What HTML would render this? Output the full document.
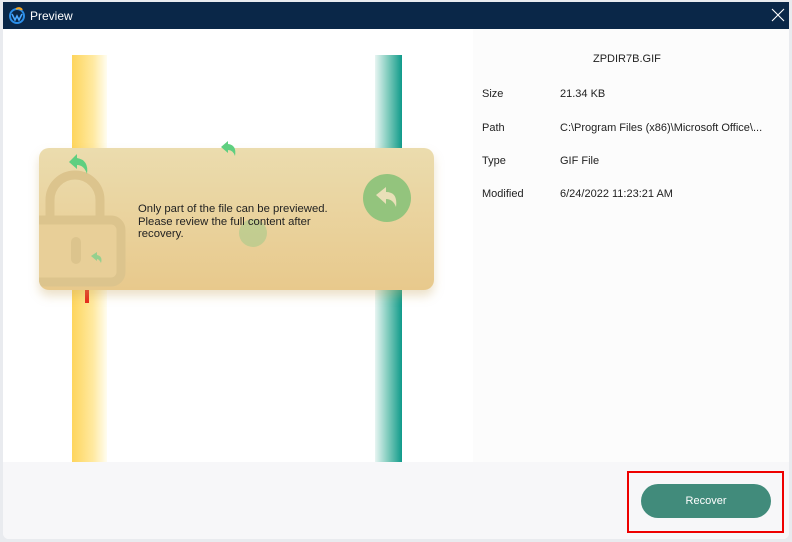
<!DOCTYPE html>
<html><head><meta charset="utf-8"><style>
body{margin:0;width:792px;height:542px;background:#e9ebef;position:relative;overflow:hidden;font-family:"Liberation Sans",Tahoma,sans-serif;}
.win{position:absolute;left:3px;top:2px;width:786px;height:537px;background:#fff;border-radius:0 0 6px 6px;overflow:hidden;}
.title{position:absolute;left:0;top:0;width:786px;height:27px;background:#0a2748;color:#fff;font-size:12px;}
.title span{position:absolute;left:27px;top:7px;}
.info{position:absolute;left:470px;top:27px;width:316px;height:433px;background:#fcfcfc;}
.ybar{position:absolute;left:69px;top:53px;width:35px;height:407px;background:linear-gradient(90deg,#fed55c,#ffe9a0 60%,#fffdf0);}
.tbar{position:absolute;left:372px;top:53px;width:27px;height:407px;background:linear-gradient(90deg,#e8f5f2,#7ccabb 50%,#0f9a8a);}
.card{position:absolute;left:36px;top:146px;width:395px;height:142px;border-radius:10px;background:linear-gradient(180deg,#ebdcae,#e8c98c);box-shadow:0 6px 10px rgba(200,170,100,.35);overflow:hidden;}
.msg{position:absolute;left:99px;top:55px;font-size:11.3px;line-height:12.5px;color:#222;}
.lbl{position:absolute;font-size:11px;color:#222;}
.btn{position:absolute;left:641px;top:484px;width:130px;height:34px;border-radius:17px;background:#418b7b;color:#fff;font-size:11px;text-align:center;line-height:34px;}
.red{position:absolute;left:627px;top:471px;width:157px;height:62px;border:2px solid #e00;box-sizing:border-box;}
</style></head><body>
<div class="win">
<div class="title">
<svg style="position:absolute;left:5px;top:4px" width="18" height="18" viewBox="0 0 18 18"><circle cx="9" cy="10" r="7" fill="none" stroke="#2a8ee8" stroke-width="2"/><path d="M4 8 L7 14 L9 10 L11 14 L14 8" fill="none" stroke="#4aa8ff" stroke-width="1.6"/><path d="M8 3 Q12 1 14 4" fill="none" stroke="#f5a623" stroke-width="2"/></svg>
<span>Preview</span>
<svg style="position:absolute;left:768px;top:6px" width="14" height="14"><path d="M1 1L13 13M13 1L1 13" stroke="#fff" stroke-width="1.1"/></svg>
</div>
<div class="info">
<div class="lbl" style="left:120px;top:24px">ZPDIR7B.GIF</div>
<div class="lbl" style="left:9px;top:59px">Size</div><div class="lbl" style="left:87px;top:59px">21.34 KB</div>
<div class="lbl" style="left:9px;top:93px">Path</div><div class="lbl" style="left:87px;top:93px">C:\Program Files (x86)\Microsoft Office\...</div>
<div class="lbl" style="left:9px;top:126px">Type</div><div class="lbl" style="left:87px;top:126px">GIF File</div>
<div class="lbl" style="left:9px;top:159px">Modified</div><div class="lbl" style="left:87px;top:159px">6/24/2022 11:23:21 AM</div>
</div>
<div class="ybar"></div><div class="tbar"></div>
<div style="position:absolute;left:82px;top:288px;width:4px;height:13px;background:#e62a1a"></div>
<div class="card">
<svg style="position:absolute;left:0;top:0" width="140" height="142"><rect x="11" y="27" width="50" height="70" rx="25" fill="none" stroke="#dcc48d" stroke-width="9"/><rect x="-10" y="72" width="92" height="62" rx="10" fill="#e8cf98" stroke="#dcc48d" stroke-width="9"/><rect x="32" y="89" width="10" height="27" rx="5" fill="#dcc48d"/>
<path d="M30 14 L38 6 L38 10 Q50 12 48 26 Q45 17 38 17 L38 21 Z" fill="#5fcf80"/>
<path d="M52 108 L58 104 L58 107 Q64 108 62 115 Q60 111 58 111 L58 113 Z" fill="#7fd08c" opacity=".8"/></svg>
<svg style="position:absolute;left:323px;top:25px" width="50" height="50"><circle cx="25" cy="25" r="24" fill="#93c47d"/><path d="M14 22 L24 14 L24 19 Q36 19 34 34 Q31 26 24 26 L24 31 Z" fill="#e9e0b8"/></svg>
<svg style="position:absolute;left:199px;top:70px" width="30" height="30"><circle cx="15" cy="15" r="14" fill="#a9c98a" opacity=".6"/></svg>
<div class="msg">Only part of the file can be previewed.<br>Please review the full content after<br>recovery.</div>
</div>
<svg style="position:absolute;left:216px;top:137px" width="20" height="20"><path d="M2 8 L9 2 L9 5 Q18 6 16 17 Q14 11 9 11 L9 14 Z" fill="#5fcf80"/></svg>
</div>
<div style="left:3px;top:462px;width:786px;height:77px;position:absolute;background:#f7f7f9;border-radius:0 0 6px 6px"></div>
<div class="btn">Recover</div>
<div class="red"></div>
</body></html>
